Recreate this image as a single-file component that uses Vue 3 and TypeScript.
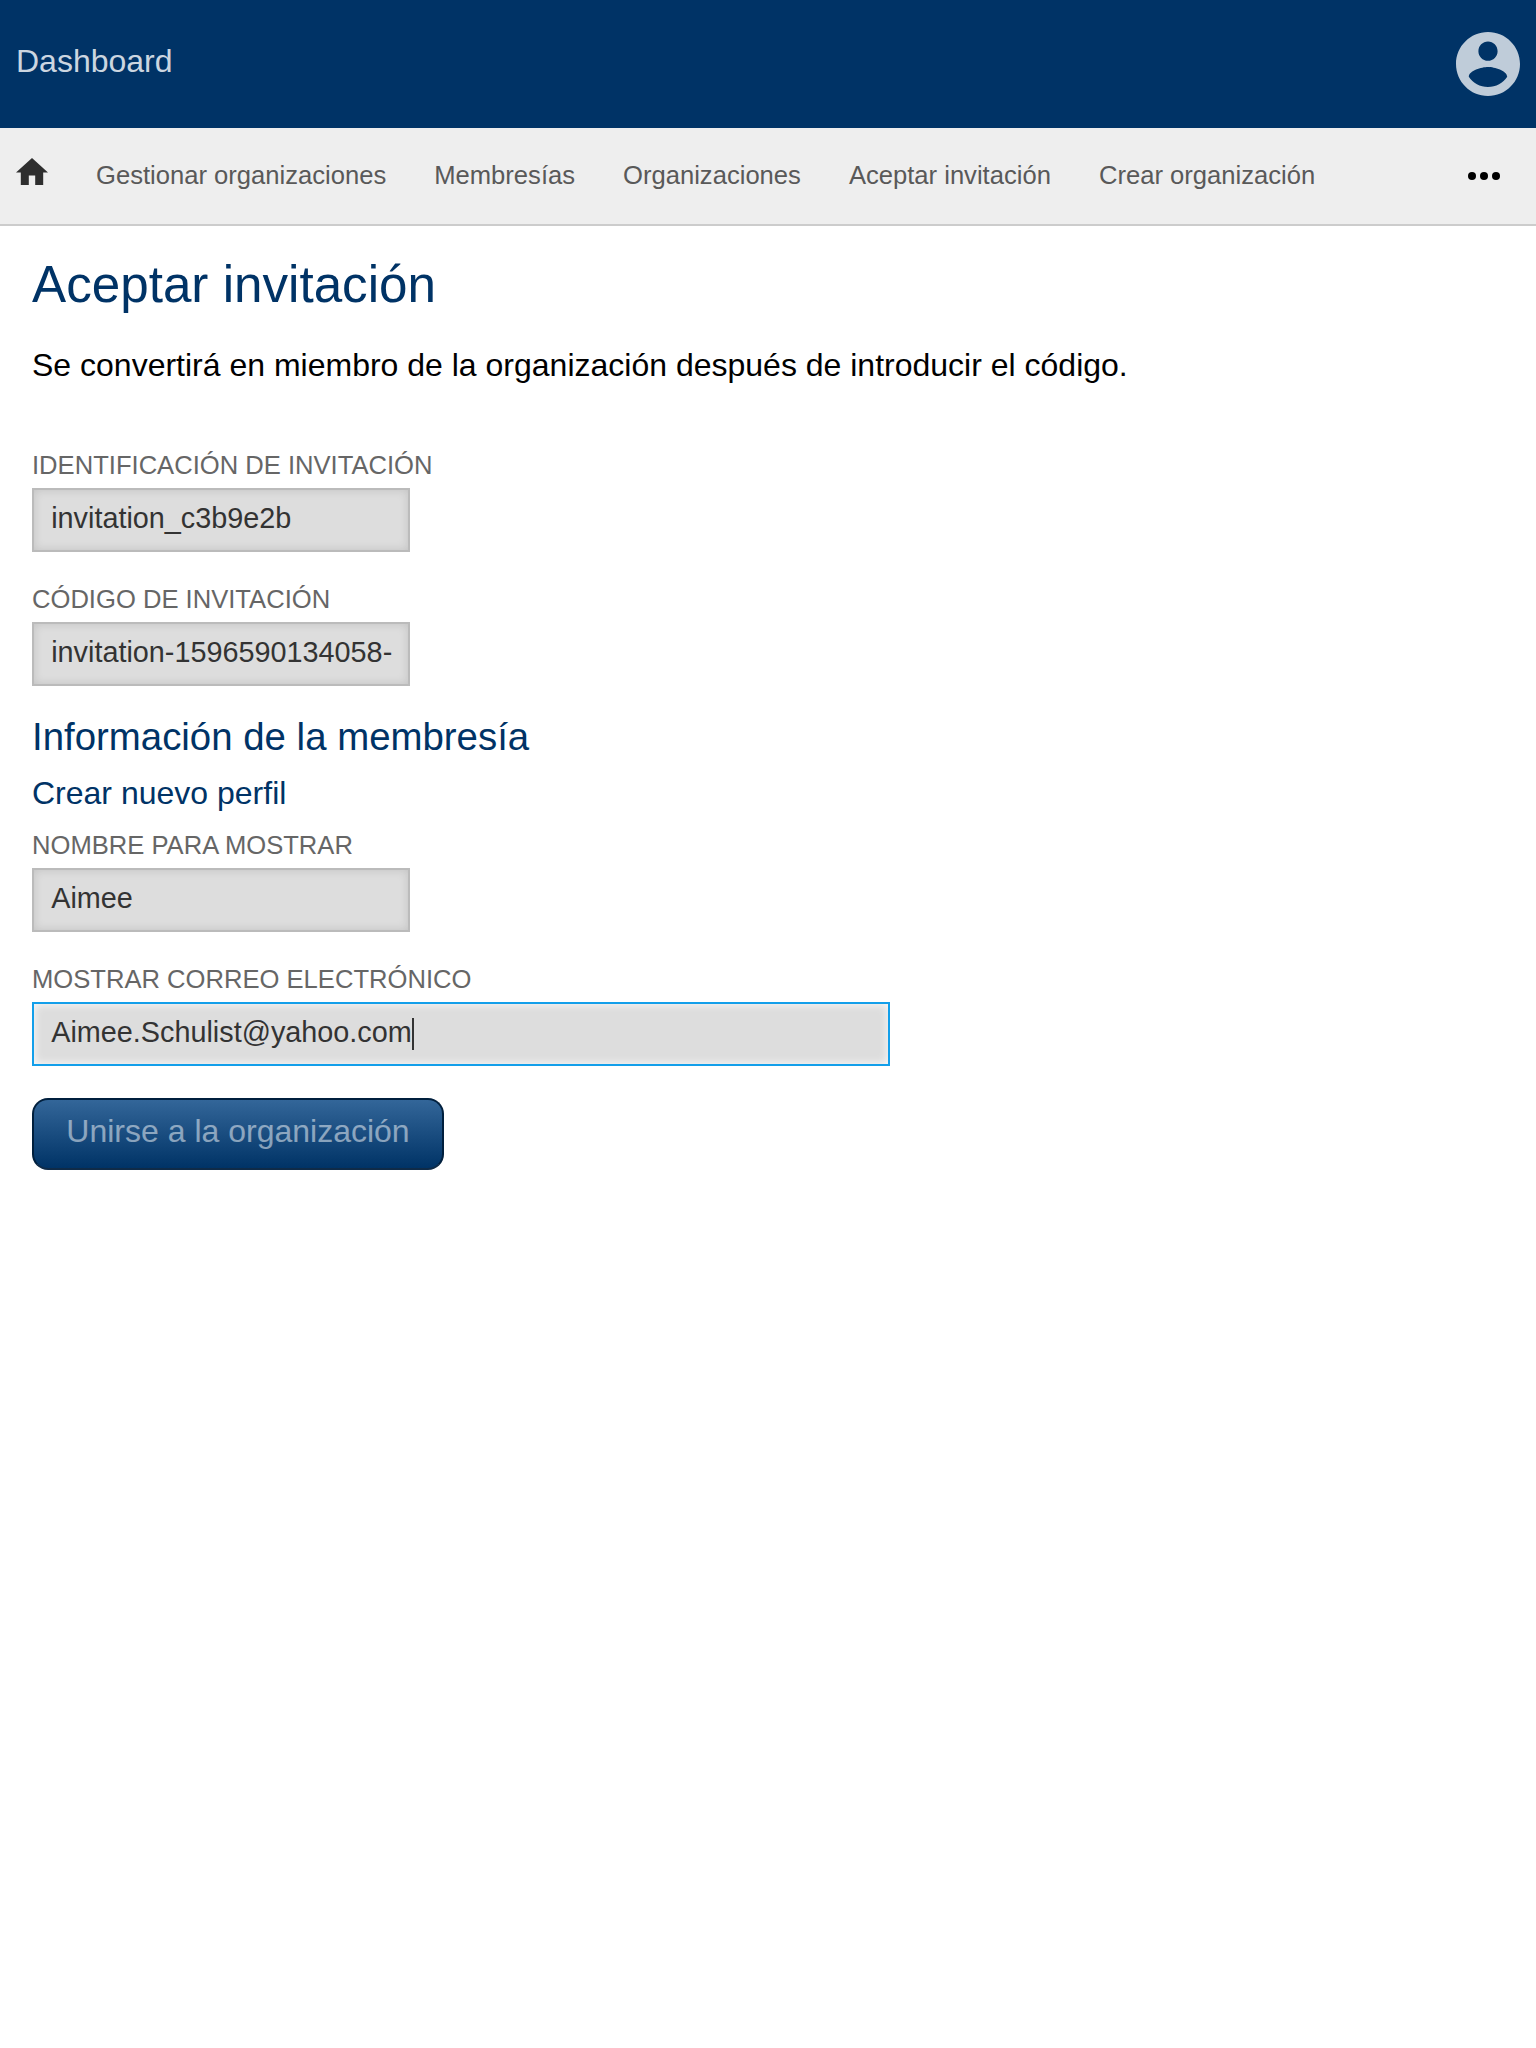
<script setup lang="ts">
interface Field {
  label: string
  value: string
  wide?: boolean
  focused?: boolean
}

const links: string[] = [
  'Gestionar organizaciones',
  'Membresías',
  'Organizaciones',
  'Aceptar invitación',
  'Crear organización',
]

const invitationFields: Field[] = [
  { label: 'Identificación de invitación', value: 'invitation_c3b9e2b' },
  { label: 'Código de invitación', value: 'invitation-1596590134058-' },
]

const profileFields: Field[] = [
  { label: 'Nombre para mostrar', value: 'Aimee' },
  { label: 'Mostrar correo electrónico', value: 'Aimee.Schulist@yahoo.com', wide: true, focused: true },
]
</script>

<template>
  <div class="page">
    <header class="header">
      <span class="brand">Dashboard</span>
      <svg class="account" viewBox="2 2 20 20">
        <path d="M12 2C6.48 2 2 6.48 2 12s4.48 10 10 10 10-4.48 10-10S17.52 2 12 2zm0 3c1.66 0 3 1.34 3 3s-1.34 3-3 3-3-1.34-3-3 1.34-3 3-3zm0 14.2c-2.5 0-4.71-1.28-6-3.22.03-1.99 4-3.08 6-3.08 1.99 0 5.97 1.09 6 3.08-1.29 1.94-3.5 3.22-6 3.22z" />
      </svg>
    </header>

    <nav class="nav">
      <svg class="home" viewBox="2 3 20 17">
        <path d="M10 20v-6h4v6h5v-8h3L12 3 2 12h3v8z" />
      </svg>
      <a v-for="link in links" :key="link" class="link">{{ link }}</a>
      <svg class="more" viewBox="0 0 24 24">
        <circle cx="6" cy="12" r="2" />
        <circle cx="12" cy="12" r="2" />
        <circle cx="18" cy="12" r="2" />
      </svg>
    </nav>

    <main class="main">
      <h1>Aceptar invitación</h1>
      <p>Se convertirá en miembro de la organización después de introducir el código.</p>

      <section class="fields invitation">
        <div v-for="field in invitationFields" :key="field.label">
          <div class="label">{{ field.label }}</div>
          <div class="input">{{ field.value }}</div>
        </div>
      </section>

      <h2>Información de la membresía</h2>
      <h3>Crear nuevo perfil</h3>

      <section class="fields profile">
        <div v-for="field in profileFields" :key="field.label">
          <div class="label">{{ field.label }}</div>
          <div class="input" :class="{ wide: field.wide, focused: field.focused }">
            <span>{{ field.value }}</span><i v-if="field.focused" class="caret"></i>
          </div>
        </div>
      </section>

      <button class="submit" disabled>Unirse a la organización</button>
    </main>
  </div>
</template>

<style>
body {
  margin: 0;
  background: #fff;
}
</style>

<style scoped>
.page {
  min-height: 2048px;
  font-family: "Liberation Sans", Arial, sans-serif;
  font-size: 32px;
  color: #000;
}

.header {
  display: flex;
  justify-content: space-between;
  box-sizing: border-box;
  height: 128px;
  padding: 0 16px;
  background: #003366;
}

.brand {
  line-height: 122px;
  color: #ccd6e0;
}

.account {
  width: 64px;
  height: 64px;
  margin-top: 32px;
  fill: #bfccd9;
}

.nav {
  display: flex;
  height: 96px;
  padding: 0 28px 0 16px;
  background: #eee;
  border-bottom: 2px solid #ccc;
}

.home {
  width: 32px;
  height: 27.2px;
  margin-top: 30.2px;
  fill: #2e2e2e;
}

.link {
  margin-left: 48px;
  font-size: 25.6px;
  line-height: 95px;
  color: #595959;
}

.more {
  width: 48px;
  height: 48px;
  margin: 24px 0 0 auto;
}

.main {
  padding: 29px 32px 0;
}

h1,
h2,
h3,
p {
  margin: 0;
  font-weight: 400;
}

h1,
h2,
h3 {
  color: #003366;
}

h1 {
  font-size: 51.2px;
  line-height: 60px;
}

p {
  margin-top: 30px;
  line-height: 40px;
}

h2 {
  margin-top: 28px;
  font-size: 38.4px;
  line-height: 46px;
}

h3 {
  margin-top: 15px;
  font-size: 32px;
  line-height: 36px;
}

.fields {
  display: flex;
  flex-direction: column;
  gap: 32px;
}

.invitation {
  margin-top: 65px;
}

.profile {
  margin-top: 19px;
}

.label {
  margin-bottom: 8px;
  font-size: 25.6px;
  line-height: 30px;
  text-transform: uppercase;
  color: #666;
}

.input {
  display: flex;
  box-sizing: border-box;
  width: 378px;
  height: 64px;
  padding: 0 17.2px;
  border: 2px solid #bbb;
  background: #ddd;
  box-shadow: inset 0 0 10px rgba(0, 0, 0, 0.12);
  font-size: 28.8px;
  line-height: 56px;
  white-space: nowrap;
  color: #333;
}

.wide {
  width: 858px;
}

.focused {
  border-color: #139fea;
  box-shadow: inset 0 0 10px rgba(255, 255, 255, 0.9);
}

.caret {
  width: 2px;
  height: 32px;
  margin-top: 14px;
  background: #333;
}

.submit {
  display: block;
  box-sizing: border-box;
  width: 412px;
  height: 72px;
  margin-top: 32px;
  padding: 0 0 5px;
  border: 2px solid #001f3d;
  border-bottom-color: #0f2b48;
  border-radius: 16px;
  background: linear-gradient(#336699, #003366);
  font: 32px "Liberation Sans", Arial, sans-serif;
  color: rgba(255, 255, 255, 0.5);
}
</style>
